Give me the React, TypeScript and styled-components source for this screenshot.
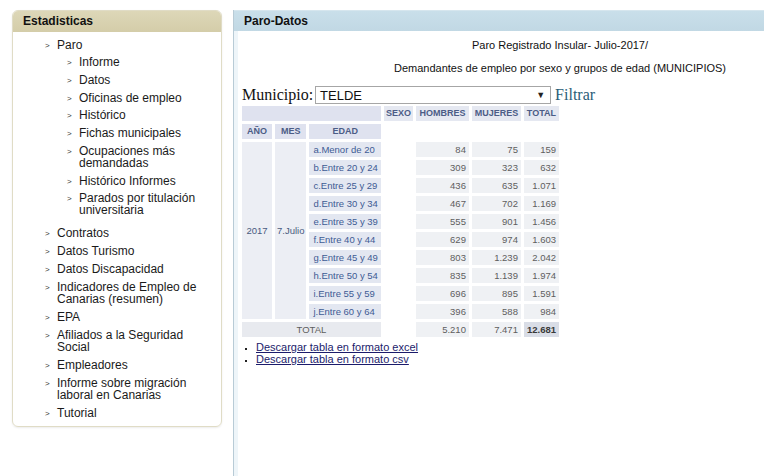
import styled, { createGlobalStyle } from 'styled-components';

const GlobalStyle = createGlobalStyle`
  html, body {
    margin: 0;
    padding: 0;
    background: #ffffff;
    overflow: hidden;
  }
  body {
    font-family: "Liberation Sans", Arial, sans-serif;
    color: #111;
  }
`;

const Page = styled.div`
  display: flex;
  align-items: flex-start;
  gap: 11px;
  padding: 10px 0 0 12px;
  height: 466px;
  overflow: hidden;
`;

const SideBox = styled.div`
  width: 208px;
  flex: none;
  border: 1px solid #e0dcc6;
  border-radius: 6px;
  overflow: hidden;
  box-shadow: 0 1px 2px rgba(0, 0, 0, 0.08);
`;

const SideHeader = styled.div`
  height: 21px;
  line-height: 20px;
  padding-left: 10px;
  font-size: 12px;
  font-weight: bold;
  color: #111;
  background: linear-gradient(#ddd7b8, #d4cda9);
`;

const MenuList = styled.ul<{ $sub?: boolean }>`
  list-style: none;
  margin: ${(p) => (p.$sub ? '2px 0 2px 0' : '0')};
  padding: ${(p) => (p.$sub ? '0 0 0 10px' : '4px 10px 4px 32px')};
`;

const MenuItem = styled.li<{ $sub?: boolean }>`
  position: relative;
  padding: ${(p) => (p.$sub ? '3px 0 2.75px 12px' : '3px 0 3px 12px')};
  font-size: 12px;
  line-height: 12px;
  color: #1a1a1a;

  &::before {
    content: '>';
    position: absolute;
    left: 0;
    top: 5px;
    font-size: 8px;
    line-height: 10px;
    color: #333;
  }
`;

const Panel = styled.div`
  width: 652px;
  flex: none;
  align-self: stretch;
  border-left: 1px solid #b8cbd6;
  box-shadow: inset 4px 0 0 #eef5f9;
`;

const PanelHeader = styled.div`
  height: 20px;
  line-height: 20px;
  padding-left: 10px;
  font-size: 12px;
  font-weight: bold;
  color: #111;
  border-top: 1px solid #d6e6ee;
  background: linear-gradient(#c9dfea, #c1d8e4);
`;

const PanelBody = styled.div`
  padding: 0 8px 0 8px;
`;

const Title = styled.p<{ $top: number }>`
  margin: ${(p) => p.$top}px 0 0 0;
  text-align: center;
  font-size: 11px;
  line-height: 13px;
  color: #111;
`;

const FilterRow = styled.div`
  display: flex;
  align-items: center;
  gap: 2px;
  margin-top: 10px;
  height: 20px;
  font-family: "Liberation Serif", "Times New Roman", serif;
  font-size: 16px;
`;

const Select = styled.div`
  height: 18px;
  width: 236px;
  border: 1px solid #a6a6a6;
  display: flex;
  align-items: center;
  justify-content: space-between;
  padding: 0 5px 0 4px;
  box-sizing: border-box;
  font-family: "Liberation Sans", Arial, sans-serif;
  font-size: 13px;
  color: #111;
  background: #fff;
`;

const Arrow = styled.span`
  font-size: 9px;
  color: #222;
`;

const FilterLink = styled.span`
  color: #2a5d78;
  margin-left: 2px;
`;

const Table = styled.table`
  border-collapse: separate;
  border-spacing: 3px;
  margin: -2px 0 0 -3px;
`;

type CellKind = 'head' | 'headLight' | 'side' | 'edad' | 'num' | 'totalLabel' | 'grand' | 'blank';

const bg: Record<CellKind, string> = {
  head: '#dfe2ef',
  headLight: '#e5e8f1',
  side: '#eceef4',
  edad: '#e3e7f1',
  num: '#eff1f4',
  totalLabel: '#e8eaef',
  grand: '#d9dde6',
  blank: 'transparent',
};

const fg: Record<CellKind, string> = {
  head: '#4c5c86',
  headLight: '#4c5c86',
  side: '#4a5a80',
  edad: '#3e5b94',
  num: '#5e5e5e',
  totalLabel: '#5e5e5e',
  grand: '#3a3a3a',
  blank: '#333',
};

const isHead = (k: CellKind) => k === 'head' || k === 'headLight';

const cellPadding = (k: CellKind) => {
  if (isHead(k) || k === 'side') return '0 2px';
  if (k === 'edad') return '0 3px 0 4px';
  return '0 3px';
};

const Cell = styled.td<{ $kind: CellKind; $align?: string; $w?: number }>`
  box-sizing: border-box;
  height: 15px;
  padding: ${(p) => cellPadding(p.$kind)};
  width: ${(p) => (p.$w ? `${p.$w}px` : 'auto')};
  background: ${(p) => bg[p.$kind]};
  color: ${(p) => fg[p.$kind]};
  text-align: ${(p) => p.$align || 'left'};
  font-size: ${(p) => (isHead(p.$kind) ? '9px' : '9.5px')};
  font-weight: ${(p) => (isHead(p.$kind) || p.$kind === 'grand' ? 'bold' : 'normal')};
  white-space: nowrap;
  line-height: 15px;
`;

const Links = styled.ul`
  margin: 1px 0 0 0;
  padding-left: 14px;
  list-style: square;
  font-size: 11px;

  li {
    line-height: 12px;
    height: 12px;
  }

  li::marker {
    font-size: 8px;
    color: #222;
  }
`;

const DownloadLink = styled.span`
  color: #1b1b6b;
  text-decoration: underline;
`;

const rows: [string, string, string, string][] = [
  ['a.Menor de 20', '84', '75', '159'],
  ['b.Entre 20 y 24', '309', '323', '632'],
  ['c.Entre 25 y 29', '436', '635', '1.071'],
  ['d.Entre 30 y 34', '467', '702', '1.169'],
  ['e.Entre 35 y 39', '555', '901', '1.456'],
  ['f.Entre 40 y 44', '629', '974', '1.603'],
  ['g.Entre 45 y 49', '803', '1.239', '2.042'],
  ['h.Entre 50 y 54', '835', '1.139', '1.974'],
  ['i.Entre 55 y 59', '696', '895', '1.591'],
  ['j.Entre 60 y 64', '396', '588', '984'],
];

const paroSub = [
  'Informe',
  'Datos',
  'Oficinas de empleo',
  'Histórico',
  'Fichas municipales',
  'Ocupaciones más demandadas',
  'Histórico Informes',
  'Parados por titulación universitaria',
];

const mainItems = [
  'Contratos',
  'Datos Turismo',
  'Datos Discapacidad',
  'Indicadores de Empleo de Canarias (resumen)',
  'EPA',
  'Afiliados a la Seguridad Social',
  'Empleadores',
  'Informe sobre migración laboral en Canarias',
  'Tutorial',
];

export default function App() {
  return (
    <>
      <GlobalStyle />
      <Page>
        <SideBox>
          <SideHeader>Estadisticas</SideHeader>
          <MenuList>
            <MenuItem>
              Paro
              <MenuList $sub>
                {paroSub.map((s) => (
                  <MenuItem key={s} $sub>
                    {s}
                  </MenuItem>
                ))}
              </MenuList>
            </MenuItem>
            {mainItems.map((s) => (
              <MenuItem key={s}>{s}</MenuItem>
            ))}
          </MenuList>
        </SideBox>

        <Panel>
          <PanelHeader>Paro-Datos</PanelHeader>
          <PanelBody>
            <Title $top={8}>Paro Registrado Insular- Julio-2017/</Title>
            <Title $top={10}>Demandantes de empleo por sexo y grupos de edad (MUNICIPIOS)</Title>
            <FilterRow>
              <span>Municipio:</span>
              <Select>
                <span>TELDE</span>
                <Arrow>▼</Arrow>
              </Select>
              <FilterLink>Filtrar</FilterLink>
            </FilterRow>
            <Table>
              <tbody>
                <tr>
                  <Cell $kind="head" colSpan={3}></Cell>
                  <Cell $kind="headLight" $align="center" $w={29}>SEXO</Cell>
                  <Cell $kind="headLight" $align="center" $w={53}>HOMBRES</Cell>
                  <Cell $kind="headLight" $align="center" $w={49}>MUJERES</Cell>
                  <Cell $kind="headLight" $align="center" $w={34}>TOTAL</Cell>
                </tr>
                <tr>
                  <Cell $kind="head" $align="center" $w={30}>AÑO</Cell>
                  <Cell $kind="head" $align="center" $w={31}>MES</Cell>
                  <Cell $kind="head" $align="center" $w={71}>EDAD</Cell>
                  <Cell $kind="blank"></Cell>
                  <Cell $kind="blank"></Cell>
                  <Cell $kind="blank"></Cell>
                  <Cell $kind="blank"></Cell>
                </tr>
                {rows.map((r, i) => (
                  <tr key={r[0]}>
                    {i === 0 && (
                      <>
                        <Cell $kind="side" $align="center" rowSpan={10}>2017</Cell>
                        <Cell $kind="side" $align="center" rowSpan={10}>7.Julio</Cell>
                      </>
                    )}
                    <Cell $kind="edad">{r[0]}</Cell>
                    <Cell $kind="blank"></Cell>
                    <Cell $kind="num" $align="right">{r[1]}</Cell>
                    <Cell $kind="num" $align="right">{r[2]}</Cell>
                    <Cell $kind="num" $align="right">{r[3]}</Cell>
                  </tr>
                ))}
                <tr>
                  <Cell $kind="totalLabel" $align="center" colSpan={3}>TOTAL</Cell>
                  <Cell $kind="blank"></Cell>
                  <Cell $kind="num" $align="right">5.210</Cell>
                  <Cell $kind="num" $align="right">7.471</Cell>
                  <Cell $kind="grand" $align="right">12.681</Cell>
                </tr>
              </tbody>
            </Table>
            <Links>
              <li>
                <DownloadLink>Descargar tabla en formato excel</DownloadLink>
              </li>
              <li>
                <DownloadLink>Descargar tabla en formato csv</DownloadLink>
              </li>
            </Links>
          </PanelBody>
        </Panel>
      </Page>
    </>
  );
}
